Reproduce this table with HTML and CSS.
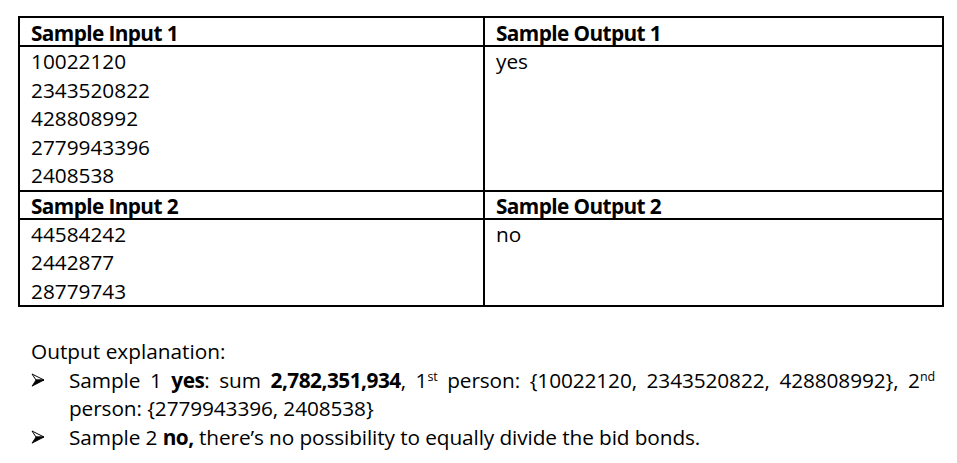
FILE: index.html
```html
<!DOCTYPE html>
<html>
<head>
<meta charset="utf-8">
<link rel="stylesheet" href="styles.css">
</head>
<body>
<div class="page">
  <div class="samples">
    <div class="cell head">Sample Input 1</div>
    <div class="cell head">Sample Output 1</div>
    <div class="cell data d1">
      <div>10022120</div>
      <div>2343520822</div>
      <div>428808992</div>
      <div>2779943396</div>
      <div>2408538</div>
    </div>
    <div class="cell data d1">
      <div>yes</div>
    </div>
    <div class="cell head h2">Sample Input 2</div>
    <div class="cell head h2">Sample Output 2</div>
    <div class="cell data d2">
      <div>44584242</div>
      <div>2442877</div>
      <div>28779743</div>
    </div>
    <div class="cell data d2">
      <div>no</div>
    </div>
  </div>

  <div class="explain">
    <p class="title">Output explanation:</p>
    <ul class="bullets">
      <li class="item">
        <svg class="arrow" width="14" height="14" viewBox="0 0 14 14"><polygon points="1,1 13,7 5,7" fill="#fff" stroke="#000" stroke-width="1"/><polygon points="5,7 13,7 1,13.2" fill="#000" stroke="#000" stroke-width="0.8"/></svg>
        <span class="txt just">Sample 1 <b>yes</b>: sum <b>2,782,351,934</b>, 1<sup>st</sup> person: {10022120, 2343520822, 428808992}, 2<sup>nd</sup> person: {2779943396, 2408538}</span>
      </li>
      <li class="item">
        <svg class="arrow" width="14" height="14" viewBox="0 0 14 14"><polygon points="1,1 13,7 5,7" fill="#fff" stroke="#000" stroke-width="1"/><polygon points="5,7 13,7 1,13.2" fill="#000" stroke="#000" stroke-width="0.8"/></svg>
        <span class="txt">Sample 2 <b>no,</b> there’s no possibility to equally divide the bid bonds.</span>
      </li>
    </ul>
  </div>
</div>
</body>
</html>
```

FILE: styles.css
```css
html, body {
  margin: 0;
  padding: 0;
  background: #fff;
}
body {
  font-family: "Open Sans", "Liberation Sans", sans-serif;
  font-size: 20.8px;
  color: #000;
}
.page {
  padding: 16px 0 0 18px;
}
.samples {
  display: grid;
  grid-template-columns: 465px 459px;
  width: 924px;
  border-top: 2px solid #000;
  border-left: 2px solid #000;
}
.cell {
  border-right: 2px solid #000;
  border-bottom: 2px solid #000;
  padding-left: 11px;
}
.head {
  font-weight: 700;
  letter-spacing: -0.6px;
  height: 25px;
  padding-top: 2px;
  line-height: 27px;
}
.head.h2 {
  height: 25px;
  padding-top: 1px;
  line-height: 26px;
}
.data {
  line-height: 28.6px;
}
.d1 {
  height: 143px;
}
.d2 {
  height: 85px;
  line-height: 28.3px;
}
.explain {
  margin-top: 30px;
  line-height: 28.6px;
}
.title {
  margin: 0;
  padding-left: 13px;
}
.bullets {
  list-style: none;
  margin: 0;
  padding: 0;
}
.item {
  display: flex;
  align-items: flex-start;
}
.arrow {
  flex: none;
  margin: 7px 0 0 13px;
  width: 14px;
  height: 14px;
}
.txt {
  margin-left: 24px;
  width: 866px;
  letter-spacing: -0.1px;
}
.just {
  text-align: justify;
}
sup {
  font-size: 0.6em;
  line-height: 0;
  vertical-align: 0.55em;
}
b {
  font-weight: 700;
  letter-spacing: -0.5px;
}
```
